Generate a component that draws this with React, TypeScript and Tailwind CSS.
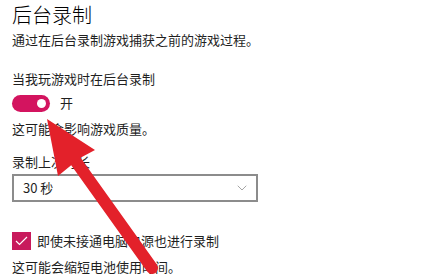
import { ChevronDown } from "lucide-react";

const font = { fontFamily: '"Noto Sans CJK SC", "Noto Sans", sans-serif' };

function Toggle() {
  return (
    <div className="w-[38px] h-[17px] rounded-full bg-[#d3145f] flex items-center justify-end pr-[4px]">
      <div className="w-[9px] h-[9px] rounded-full bg-white" />
    </div>
  );
}

function Arrow() {
  return (
    <svg className="absolute inset-0 pointer-events-none" width="447" height="277" viewBox="0 0 447 277">
      <line x1="72" y1="156" x2="152" y2="268" stroke="#e3212a" strokeWidth="12" strokeLinecap="round" />
      <path d="M47 119 L95 150 L80 158 L58 176 Z" fill="#e3212a" />
    </svg>
  );
}

export default function App() {
  return (
    <div className="relative w-[447px] h-[277px] bg-white overflow-hidden text-[#1f1f1f]" style={font}>
      <div className="flex flex-col px-[12px]">
        <div className="h-[30px] flex items-center text-[20px] font-light text-black">后台录制</div>
        <div className="h-[20px] flex items-center text-[13px]">通过在后台录制游戏捕获之前的游戏过程。</div>
        <div className="h-[20px] mt-[19px] flex items-center text-[13px]">当我玩游戏时在后台录制</div>
        <div className="h-[20px] mt-[4px] flex items-center gap-[10px]">
          <Toggle />
          <span className="text-[13px]">开</span>
        </div>
        <div className="h-[20px] mt-[6px] flex items-center text-[13px]">这可能会影响游戏质量。</div>
        <div className="h-[20px] mt-[13px] flex items-center text-[13px]">录制上次时长</div>
        <div className="mt-[2px] w-[246px] h-[28px] border-2 border-[#8c8c8c] flex items-center justify-between pl-[9px] pr-[6px]">
          <span className="text-[13px]">30 秒</span>
          <ChevronDown size={16} strokeWidth={1} className="text-[#777]" />
        </div>
        <div className="h-[20px] mt-[29px] flex items-center gap-[6px]">
          <div className="w-[19px] h-[18px] bg-[#c81a5c] flex items-center justify-center">
            <svg width="13" height="10" viewBox="0 0 13 10">
              <path d="M1 5 L4.5 8.5 L12 1" fill="none" stroke="white" strokeWidth="1.2" />
            </svg>
          </div>
          <span className="text-[13px]">即使未接通电脑电源也进行录制</span>
        </div>
        <div className="h-[20px] mt-[6px] flex items-center text-[13px]">这可能会缩短电池使用时间。</div>
      </div>
      <Arrow />
    </div>
  );
}
